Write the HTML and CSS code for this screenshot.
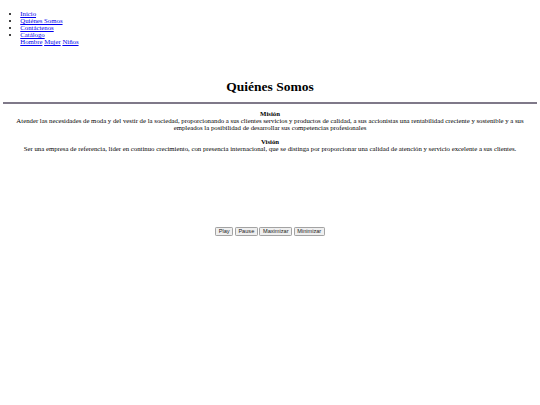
FILE: index.html
```html
<!DOCTYPE html>
<html lang="es">
<head>
<meta charset="utf-8">
<title>Quiénes Somos</title>
<link rel="stylesheet" href="styles.css">
</head>
<body class="site">
<ul class="nav">
  <li><a class="link" href="#">Inicio</a></li>
  <li><a class="link" href="#">Quiénes Somos</a></li>
  <li><a class="link" href="#">Contáctenos</a></li>
  <li><a class="link" href="#">Catálogo</a>
    <div class="sub"><a class="link" href="#">Hombre</a> <a class="link" href="#">Mujer</a> <a class="link" href="#">Niños</a></div>
  </li>
</ul>
<div class="header-space"></div>
<h1 class="title">Quiénes Somos</h1>
<hr class="rule">
<p class="block"><b>Misión</b><br>Atender las necesidades de moda y del vestir de la sociedad, proporcionando a sus clientes servicios y productos de calidad, a sus accionistas una rentabilidad creciente y sostenible y a sus empleados la posibilidad de desarrollar sus competencias profesionales</p>
<p class="block"><b>Visión</b><br>Ser una empresa de referencia, líder en continuo crecimiento, con presencia internacional, que se distinga por proporcionar una calidad de atención y servicio excelente a sus clientes.</p>
<div class="media">
  <div class="screen"></div>
  <div class="controls">
    <button class="btn" type="button">Play</button>
    <button class="btn" type="button">Pause</button>
    <button class="btn" type="button">Maximizar</button>
    <button class="btn" type="button">Minimizar</button>
  </div>
</div>
</body>
</html>
```
FILE: styles.css
```css
html {
  background: #ffffff;
}
.site {
  margin: 3.375px;
  font-family: "Liberation Serif", "Times New Roman", serif;
  font-size: 6.78px;
  color: #000000;
}
.nav {
  margin: 6.75px 0;
  padding-left: 16.875px;
}
.link {
  color: #0000ee;
  text-decoration: underline;
}
.header-space {
  height: 18px;
}
.title {
  text-align: center;
  font-size: 13.5px;
  font-weight: bold;
  margin: 9.05px 0 7px;
}
.rule {
  margin: 3.375px 0;
  height: 1.7px;
  border: none;
  background: #7f7989;
}
.block {
  text-align: center;
  margin: 6.75px 0;
}
.media {
  text-align: center;
}
.screen {
  height: 68px;
}
.controls {
  display: flex;
  justify-content: center;
  gap: 1.7px;
}
.btn {
  font-family: "Liberation Sans", Arial, sans-serif;
  font-size: 5.625px;
  line-height: normal;
  padding: 0.5px 2.5px;
  margin: 0;
  background: #efefef;
  border: 0.8px solid #a3a3a3;
  border-radius: 1.2px;
  color: #222222;
}
```
